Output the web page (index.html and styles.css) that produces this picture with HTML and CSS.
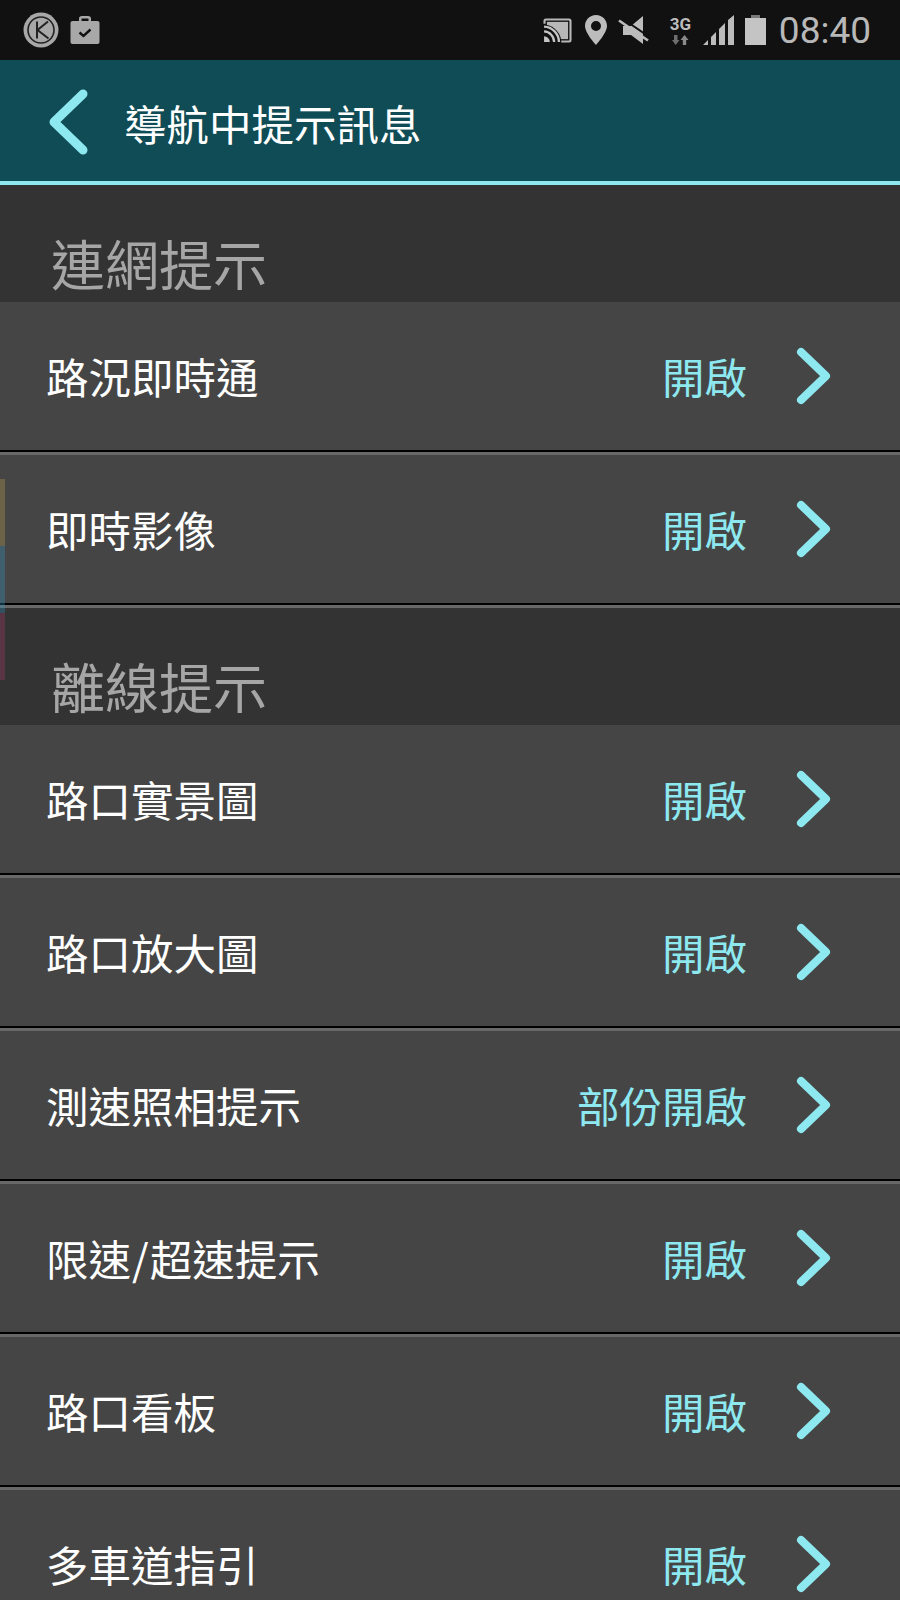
FILE: index.html
```html
<!DOCTYPE html>
<html lang="zh-Hant">
  <head>
    <meta charset="UTF-8" />
    <meta name="viewport" content="width=device-width, initial-scale=1.0" />
    <title>導航中提示訊息</title>
    <link rel="stylesheet" href="styles.css">
  </head>

  <body>
    <svg class="defs" width="0" height="0">
      <symbol id="chev" viewBox="0 0 36 58">
        <path d="M5 5 L30 29 L5 53" fill="none" stroke="#8de8f0" stroke-width="8" stroke-linecap="round" stroke-linejoin="round" />
      </symbol>
    </svg>

    <div class="tabs">
      <div class="tab ochre"></div>
      <div class="tab blue"></div>
      <div class="tab red"></div>
    </div>

    <div class="status">
      <div class="status-left">
        <svg class="ic-k" viewBox="0 0 36 36">
          <circle cx="18" cy="18" r="17.500" fill="#a8a8a8" />
          <circle cx="18" cy="18" r="13" fill="none" stroke="#222" stroke-width="1.600" />
          <path d="M14 9.500 V26.500 M25 9.500 L14.500 18 L25.500 26.500" fill="none" stroke="#222" stroke-width="2" />
        </svg>
        <svg class="ic-bag" viewBox="0 0 30 30">
          <path d="M9 6 V3.500 Q9 1 12 1 H18 Q21 1 21 3.500 V6 H18.500 V3.500 H11.500 V6 Z" fill="#a8a8a8" />
          <rect x="0.500" y="6" width="29" height="23" rx="2" fill="#a8a8a8" />
          <path d="M9.500 17.500 L13.500 21 L20.500 14.500" fill="none" stroke="#111" stroke-width="2.400" />
        </svg>
      </div>
      <div class="status-right">
        <svg class="ic-cast" viewBox="0 0 30 26">
          <rect x="4" y="4" width="22" height="18" fill="#b8b8b8" />
          <path d="M1.500 6 V3 Q1.500 1.500 3 1.500 H27 Q28.500 1.500 28.500 3 V23 Q28.500 24.500 27 24.500 H16" fill="none" stroke="#b8b8b8" stroke-width="2.200" />
          <path d="M0 7 H3 A19 19 0 0 1 19 26 H0 Z" fill="#111" />
          <path d="M1 9 A16 16 0 0 1 16.500 25 M1 14 A11 11 0 0 1 11.500 25" fill="none" stroke="#c4c4c4" stroke-width="2.400" />
          <path d="M1 19 A6 6 0 0 1 7 25 H1 Z" fill="#c4c4c4" />
        </svg>
        <svg class="ic-pin" viewBox="0 0 22 30">
          <path fill-rule="evenodd" d="M11 0 C4.500 0 0 5 0 11 C0 18 11 30 11 30 C11 30 22 18 22 11 C22 5 17.500 0 11 0 Z M11 6 A5 5 0 1 1 11 16 A5 5 0 1 1 11 6 Z" fill="#bcbcbc" />
        </svg>
        <svg class="ic-mute" viewBox="0 0 32 28">
          <path d="M5 10 H13 L25 0 V28 L13 19 H5 Z" fill="#bcbcbc" />
          <path d="M3 1.500 L32 21.500" stroke="#111" stroke-width="2" />
          <path d="M1 4.500 L30 24.500" stroke="#bcbcbc" stroke-width="2.600" />
        </svg>
        <div class="net">
          <span class="net-txt">3G</span>
          <svg class="ic-arrows" viewBox="0 0 18 10">
            <path d="M1 5 H3 V0 H6.500 V5 H8.500 L4.700 10 Z" fill="#6e6e6e" />
            <path d="M9.500 5 L13.500 0 L17.500 5 H15.200 V10 H11.800 V5 Z" fill="#8a8a8a" />
          </svg>
        </div>
        <svg class="ic-signal" viewBox="0 0 31 30">
          <path d="M0 30 L5 25 V30 Z M8 30 V22 L13 17 V30 Z M16 30 V14 L22 8 V30 Z M25 30 V5 L31 0 V30 Z" fill="#bcbcbc" />
        </svg>
        <svg class="ic-batt" viewBox="0 0 21 30">
          <rect x="6" y="0" width="9" height="3" fill="#7a7a7a" />
          <rect x="0" y="3" width="21" height="27" fill="#c4c4c4" />
        </svg>
        <span class="time">08:40</span>
      </div>
    </div>

    <div class="header">
      <svg class="back" viewBox="0 0 42 70">
        <path d="M36 6 L7 34 L36 62" fill="none" stroke="#8de8f0" stroke-width="9" stroke-linecap="round" stroke-linejoin="round" />
      </svg>
      <h1 class="title">導航中提示訊息</h1>
    </div>

    <div class="section"><span>連網提示</span></div>
    <div class="row">
      <span class="name">路況即時通</span>
      <span class="val">開啟</span>
      <svg class="chev"><use href="#chev" /></svg>
    </div>
    <div class="row">
      <span class="name">即時影像</span>
      <span class="val">開啟</span>
      <svg class="chev"><use href="#chev" /></svg>
    </div>

    <div class="section"><span>離線提示</span></div>
    <div class="row">
      <span class="name">路口實景圖</span>
      <span class="val">開啟</span>
      <svg class="chev"><use href="#chev" /></svg>
    </div>
    <div class="row">
      <span class="name">路口放大圖</span>
      <span class="val">開啟</span>
      <svg class="chev"><use href="#chev" /></svg>
    </div>
    <div class="row">
      <span class="name">測速照相提示</span>
      <span class="val">部份開啟</span>
      <svg class="chev"><use href="#chev" /></svg>
    </div>
    <div class="row">
      <span class="name">限速<span class="slash">/</span>超速提示</span>
      <span class="val">開啟</span>
      <svg class="chev"><use href="#chev" /></svg>
    </div>
    <div class="row">
      <span class="name">路口看板</span>
      <span class="val">開啟</span>
      <svg class="chev"><use href="#chev" /></svg>
    </div>
    <div class="row">
      <span class="name">多車道指引</span>
      <span class="val">開啟</span>
      <svg class="chev"><use href="#chev" /></svg>
    </div>
  </body>
</html>
```

FILE: styles.css
```css
html {
  background: #333;
}
body {
  margin: 0;
  width: 900px;
  height: 1600px;
  overflow: hidden;
  position: relative;
  background: #333;
  font-family: "Noto Sans CJK TC", "Noto Sans", sans-serif;
}
.defs {
  position: absolute;
}

/* colour strip on the left edge */
.tabs {
  position: absolute;
  left: 0;
  top: 479px;
  width: 5px;
}
.tab {
  height: 67px;
}
.ochre {
  background: rgba(197, 167, 80, 0.3);
}
.blue {
  background: rgba(50, 157, 207, 0.3);
}
.red {
  background: rgba(180, 60, 110, 0.3);
}

.status {
  height: 60px;
  background: #111;
  display: flex;
  justify-content: space-between;
  align-items: center;
  padding: 0 29px 0 23px;
}
.status-left {
  display: flex;
  align-items: center;
  gap: 11px;
}
.ic-k {
  width: 36px;
  height: 36px;
}
.ic-bag {
  width: 30px;
  height: 30px;
}
.status-right {
  display: flex;
  align-items: center;
}
.ic-cast {
  width: 29px;
  height: 25px;
  margin-right: 13px;
}
.ic-pin {
  width: 22px;
  height: 30px;
  margin-right: 11px;
}
.ic-mute {
  width: 32px;
  height: 28px;
  margin-right: 19px;
}
.net {
  width: 23px;
  margin-right: 11px;
  display: flex;
  flex-direction: column;
  align-items: center;
}
.net-txt {
  font-family: Roboto, sans-serif;
  font-weight: 700;
  font-size: 17px;
  line-height: 18px;
  color: #bcbcbc;
}
.ic-arrows {
  width: 18px;
  height: 10px;
  margin-top: 2px;
}
.ic-signal {
  width: 31px;
  height: 30px;
  margin-right: 11px;
}
.ic-batt {
  width: 21px;
  height: 30px;
  margin-right: 13px;
}
.time {
  font-family: Roboto, sans-serif;
  font-size: 37px;
  color: #b8b8b8;
}

.header {
  height: 117px;
  padding: 4px 0 0 47px;
  background: #104c55;
  border-bottom: 4px solid #8de8f0;
  display: flex;
  align-items: center;
}
.back {
  width: 42px;
  height: 70px;
}
.title {
  margin: 0 0 0 35px;
  font-size: 42.5px;
  font-weight: 400;
  color: #fff;
}

.section {
  height: 117px;
  display: flex;
  align-items: flex-end;
  padding-left: 51px;
  font-size: 54px;
  color: #a6a6a6;
  line-height: 1;
}
.section span {
  margin-bottom: 12px;
}

.row {
  height: 148px;
  background: #454545;
  display: flex;
  align-items: center;
  padding: 0 68px 0 46px;
  font-size: 42.5px;
  border-bottom: 2px solid #000;
  box-shadow: 0 3px 0 #686868;
  margin-bottom: 3px;
}
.name {
  color: #fff;
  flex: 1;
  margin-bottom: 2px;
}
.slash {
  padding: 0 1px;
}
.val {
  color: #8de8f0;
  margin-bottom: 2px;
}
.chev {
  width: 36px;
  height: 58px;
  margin-left: 49px;
}
```
